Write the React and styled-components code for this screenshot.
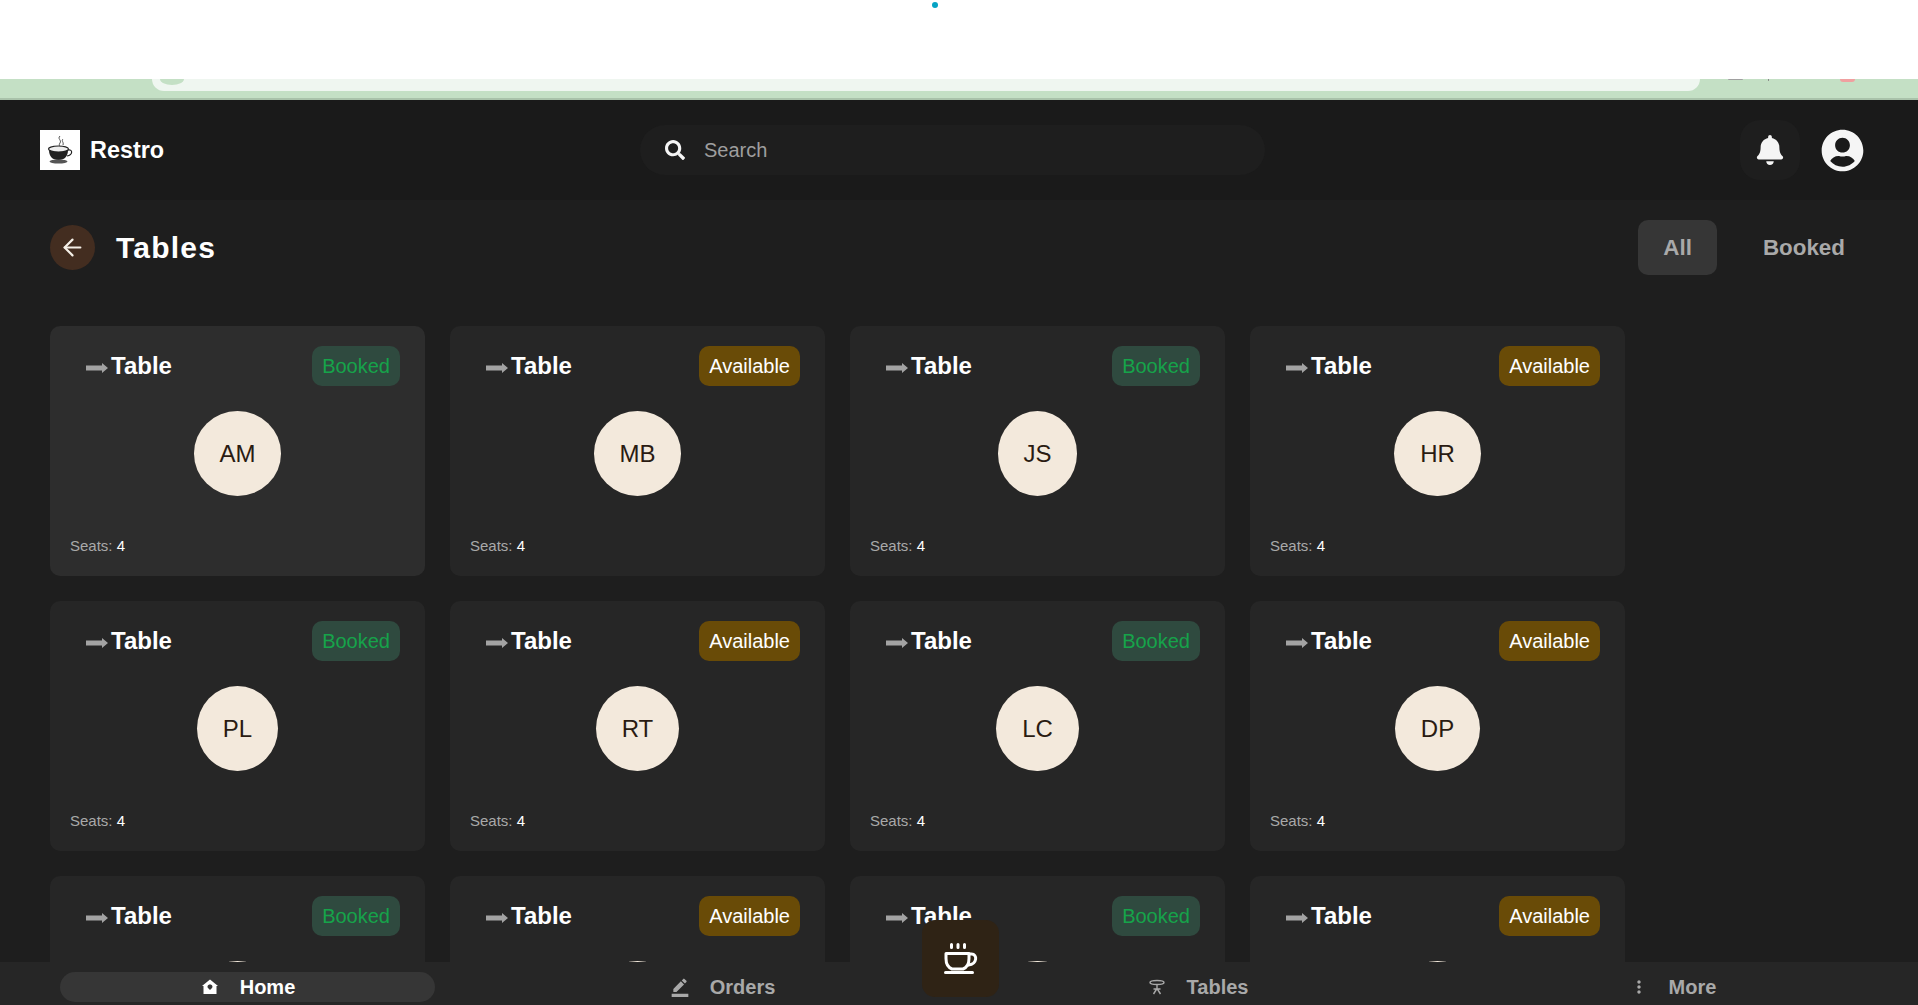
import React from 'react';
import styled, { createGlobalStyle } from 'styled-components';
import { MdBorderColor, MdMoreVert } from 'react-icons/md';
import { FaBell, FaUserCircle, FaSearch } from 'react-icons/fa';
import { ArrowLeft } from 'lucide-react';

const Global = createGlobalStyle`
  html, body { margin: 0; padding: 0; height: 100%; overflow: hidden; background: #1e1e1e; }
  body { font-family: "Liberation Sans", Arial, sans-serif; }
  * { box-sizing: border-box; }
`;
const Page = styled.div`height: 1005px; display: flex; flex-direction: column; position: relative; overflow: hidden;`;
const Blank = styled.div`height: 79px; background: #fff; flex: none; display: flex; justify-content: center; padding-right: 48px; padding-top: 2px;`;
const Dot = styled.span`width: 6px; height: 6px; border-radius: 50%; background: #06a3c4;`;
const Strip = styled.div`height: 21px; flex: none; background: #c4e0c5; border-bottom: 2px solid #a9c2aa; padding-left: 152px; display: flex; align-items: flex-start; overflow: hidden;`;
const StripInner = styled.div`width: 1548px; flex: none; height: 12px; background: #eff6f0; border-radius: 0 0 16px 16px; padding-left: 8px;`;
const StripDot = styled.span`display: block; width: 24px; height: 6px; border-radius: 0 0 50% 50% / 0 0 100% 100%; background: #c4e0c5;`;
const StripMark = styled.span`flex: none; margin-left: ${p => p.$gap}px; width: ${p => p.$w}px; height: ${p => p.$h}px; background: ${p => p.$color}; border-radius: 0 0 8px 8px;`;
const Header = styled.header`height: 100px; flex: none; background: #1a1a1a; display: flex; align-items: center; padding: 0 54px 0 40px;`;
const Brand = styled.div`display: flex; align-items: center; gap: 10px; font-size: 23.4px; font-weight: 700; color: #fff; width: 600px;`;
const LogoBox = styled.div`width: 40px; height: 40px; background: #fff; display: flex; align-items: center; justify-content: center;`;
const Search = styled.div`width: 625px; height: 50px; border-radius: 25px; background: #1e1e1e; display: flex; align-items: center; gap: 19px; padding: 0 25px; color: #9e9e9e; font-size: 20px;`;
const SearchIcon = styled(FaSearch)`color: #f5f5f5; flex: none;`;
const Actions = styled.div`margin-left: auto; display: flex; align-items: center; gap: 21px;`;
const BellBox = styled.div`width: 60px; height: 60px; border-radius: 20px; background: #1e1e1e; display: flex; align-items: center; justify-content: center; color: #f5f5f5;`;
const UserIcon = styled(FaUserCircle)`color: #f5f5f5; flex: none;`;
const Main = styled.main`flex: 1; min-height: 0; overflow: hidden; background: #1e1e1e; padding: 20px 48px 0 50px;`;
const TitleRow = styled.div`height: 55px; display: flex; align-items: center; justify-content: space-between; margin-bottom: 51px;`;
const TitleLeft = styled.div`display: flex; align-items: center; gap: 21px;`;
const BackBtn = styled.div`width: 45px; height: 45px; border-radius: 50%; background: #432d20; color: #f5f0e8; display: flex; align-items: center; justify-content: center;`;
const Title = styled.h1`margin: 0; font-size: 30px; font-weight: 700; letter-spacing: 1.2px; color: #fff;`;
const Filters = styled.div`display: flex; gap: 21px;`;
const Filter = styled.div`height: 55px; padding: 0 25px; border-radius: 10px; display: flex; align-items: center; font-size: 22.4px; font-weight: 700; color: #a9a9a9; background: ${p => p.$active ? '#363636' : 'transparent'};`;
const Grid = styled.div`display: grid; grid-template-columns: repeat(auto-fill, 375px); gap: 25px;`;
const Card = styled.div`height: 250px; border-radius: 10px; background: ${p => p.$hover ? '#2d2d2d' : '#262626'}; padding: 20px 25px 20px 20px; display: flex; flex-direction: column;`;
const CardTop = styled.div`display: flex; align-items: center; justify-content: space-between; height: 40px;`;
const CardName = styled.div`display: flex; align-items: center; gap: 3px; padding-left: 16px; font-size: 24px; font-weight: 700; color: #fff;`;
const ArrowIcon = styled.svg`margin-top: 4px; flex: none;`;
const Badge = styled.div`height: 40px; padding: 0 10px; border-radius: 10px; display: flex; align-items: center; font-size: 20px; background: ${p => p.$booked ? '#2f4a3f' : '#694b07'}; color: ${p => p.$booked ? '#16a34a' : '#fff'};`;
const AvatarWrap = styled.div`display: flex; justify-content: center; margin-top: 25px; padding-left: 5px;`;
const Avatar = styled.div`height: 85px; padding: 0 25.7px; border-radius: 50%; background: #f3e9dc; color: #2a1b12; display: flex; align-items: center; font-size: 24px;`;
const Seats = styled.div`margin-top: auto; font-size: 15px; color: #a9a9a9; line-height: 20px;`;
const SeatNum = styled.span`color: #fff;`;
const Nav = styled.nav`position: absolute; left: 0; right: 0; bottom: 0; height: 43px; background: #262626; display: flex; align-items: flex-start; padding: 10px 58px 0 60px; justify-content: space-between;`;
const NavItem = styled.div`width: 375px; height: 30px; border-radius: 15px; display: flex; align-items: center; justify-content: center; gap: 20px; font-size: 20px; font-weight: 700; color: ${p => p.$active ? '#fff' : '#a9a9a9'}; background: ${p => p.$active ? '#363636' : 'transparent'};`;
const Fab = styled.div`position: absolute; left: 922px; top: 920px; width: 77px; height: 77px; border-radius: 13px; background: #2f2315; display: flex; align-items: center; justify-content: center;`;

const Arrow = () => (
  <ArrowIcon width="22" height="12" viewBox="0 0 22 12"><path d="M0 3.500h16V1l6 5-6 5V8.500H0z" fill="#a3a3a3" /></ArrowIcon>
);
const CupLogo = () => (
  <svg width="26" height="28" viewBox="0 0 26 28">
    <path d="M13 0c-3 3 2 4 0 7s1 3 0 4M16 3c-2 2 1 3 0 6" stroke="#555" strokeWidth="1" fill="none" />
    <ellipse cx="11.5" cy="13" rx="10" ry="3" fill="#eee" stroke="#222" strokeWidth="1.2" />
    <path d="M2 14c0 6 3 10 9.500 10S21 20 21 14c-3 2.500-16 2.500-19 0z" fill="#222" />
    <path d="M21 14c5-1 5 5-1 6" stroke="#222" strokeWidth="1.2" fill="none" />
    <ellipse cx="11.500" cy="25.500" rx="9" ry="2" fill="#555" />
  </svg>
);
const Cup = () => (
  <svg width="34" height="31" viewBox="0 0 34 31" fill="none" stroke="#fff" strokeWidth="3" strokeLinecap="round" strokeLinejoin="round">
    <path d="M7.500 1.500v3M14 1.500v3M20.500 1.500v3" strokeWidth="3" />
    <path d="M2 10.500h23v5c0 5-2 9-6 10.500H8c-4-1.500-6-5.500-6-10.500z" />
    <path d="M25 11h2.500c6 0 6 10-3 11" />
    <path d="M1.500 29.500h27" />
  </svg>
);
const HomeGlyph = () => (
  <svg width="20" height="20" viewBox="0 0 20 20"><path fillRule="evenodd" d="M10 2.500l8 6.500h-1.500v8h-13V9H2zM10 7.500c-2.500 0-3 2.500-2 3.500l2 2 2-2c1-1 .5-3.500-2-3.500z" fill="#fff" /></svg>
);
const TableGlyph = () => (
  <svg width="20" height="20" viewBox="0 0 20 20" fill="none" stroke="#a9a9a9" strokeWidth="1.4"><ellipse cx="10" cy="5.500" rx="7" ry="2" /><path d="M10 7.500v4M10 11.500l-3.500 5.500M10 11.500l3.500 5.500M6.500 12h7" /></svg>
);

const rows = [['AM','MB','JS','HR'],['PL','RT','LC','DP'],['SK','TN','VG','AK']];

export default function App() {
  return (
    <Page>
      <Global />
      <Blank><Dot /></Blank>
      <Strip>
        <StripInner><StripDot /></StripInner>
        <StripMark $gap={28} $w={15} $h={1} $color="#a0a0a0" />
        <StripMark $gap={25} $w={1} $h={2} $color="#888" />
        <StripMark $gap={71} $w={15} $h={3} $color="#f0a0a0" />
      </Strip>
      <Header>
        <Brand><LogoBox><CupLogo /></LogoBox>Restro</Brand>
        <Search><SearchIcon size={20} />Search</Search>
        <Actions>
          <BellBox><FaBell size={30} /></BellBox>
          <UserIcon size={43} />
        </Actions>
      </Header>
      <Main>
        <TitleRow>
          <TitleLeft>
            <BackBtn><ArrowLeft size={27} strokeWidth={1.9} /></BackBtn>
            <Title>Tables</Title>
          </TitleLeft>
          <Filters>
            <Filter $active>All</Filter>
            <Filter>Booked</Filter>
          </Filters>
        </TitleRow>
        <Grid>
          {rows.flat().map((n, i) => (
            <Card key={n} $hover={i === 0}>
              <CardTop>
                <CardName><Arrow />Table</CardName>
                <Badge $booked={i % 2 === 0}>{i % 2 === 0 ? 'Booked' : 'Available'}</Badge>
              </CardTop>
              <AvatarWrap><Avatar>{n}</Avatar></AvatarWrap>
              <Seats>Seats: <SeatNum>4</SeatNum></Seats>
            </Card>
          ))}
        </Grid>
      </Main>
      <Nav>
        <NavItem $active><HomeGlyph />Home</NavItem>
        <NavItem><MdBorderColor size={20} />Orders</NavItem>
        <NavItem><TableGlyph />Tables</NavItem>
        <NavItem><MdMoreVert size={20} />More</NavItem>
      </Nav>
      <Fab><Cup /></Fab>
    </Page>
  );
}
